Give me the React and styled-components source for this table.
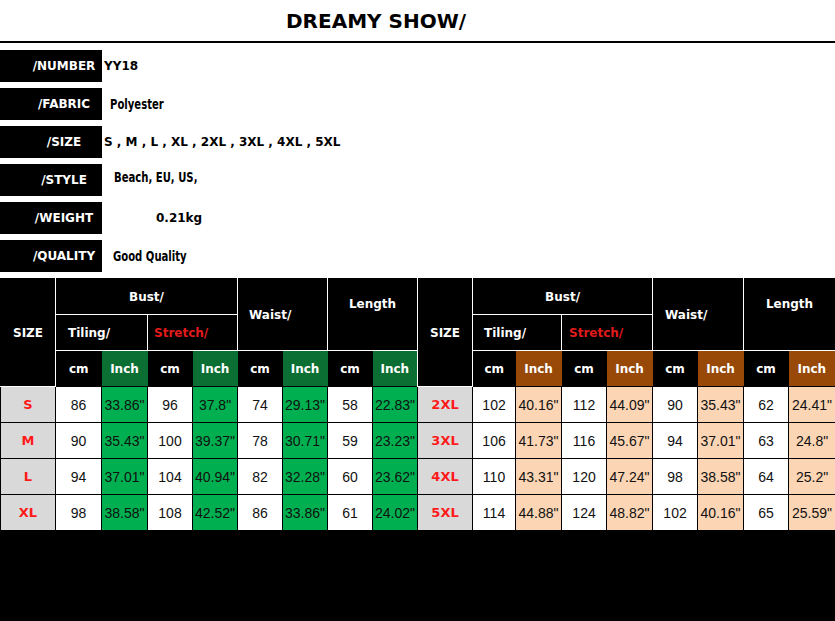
import React from 'react'
import styled, { createGlobalStyle } from 'styled-components'

const GlobalStyle = createGlobalStyle`
    html, body {
        margin: 0;
        padding: 0;
        background: #fff;
    }
    body {
        width: 835px;
        font-family: "DejaVu Sans", Verdana, sans-serif;
    }
`

const info = [
    { label: '/NUMBER', value: 'YY18', indent: 2 },
    { label: '/FABRIC', value: 'Polyester', indent: 8, narrow: true },
    { label: '/SIZE', value: 'S , M , L , XL , 2XL , 3XL , 4XL , 5XL', indent: 2 },
    { label: '/STYLE', value: 'Beach, EU, US,', indent: 12, narrow: true, lift: 3 },
    { label: '/WEIGHT', value: '0.21kg', indent: 54 },
    { label: '/QUALITY', value: 'Good Quality', indent: 11, narrow: true },
]

const leftRows = [
    ['S', '86', '33.86"', '96', '37.8"', '74', '29.13"', '58', '22.83"'],
    ['M', '90', '35.43"', '100', '39.37"', '78', '30.71"', '59', '23.23"'],
    ['L', '94', '37.01"', '104', '40.94"', '82', '32.28"', '60', '23.62"'],
    ['XL', '98', '38.58"', '108', '42.52"', '86', '33.86"', '61', '24.02"'],
]

const rightRows = [
    ['2XL', '102', '40.16"', '112', '44.09"', '90', '35.43"', '62', '24.41"'],
    ['3XL', '106', '41.73"', '116', '45.67"', '94', '37.01"', '63', '24.8"'],
    ['4XL', '110', '43.31"', '120', '47.24"', '98', '38.58"', '64', '25.2"'],
    ['5XL', '114', '44.88"', '124', '48.82"', '102', '40.16"', '65', '25.59"'],
]

const colWidths = [55, 46, 46, 45, 45, 45, 45, 45, 45, 55, 43, 46, 45, 46, 45, 46, 45, 47]

function HalfHeader({ first }) {
    return (
        <>
            <HeadCell rowSpan={3} $noTop $noLeft={first}>SIZE</HeadCell>
            <HeadCell colSpan={4} $noTop>Bust/</HeadCell>
            <HeadCell colSpan={2} rowSpan={2} $noTop $align="left" $pad={first ? 11 : 12}>Waist/</HeadCell>
            <HeadCell colSpan={2} rowSpan={2} $noTop $noRight={!first} $lift>Length</HeadCell>
        </>
    )
}

function App() {
    return (
        <Page>
            <GlobalStyle />
            <TitleBar>
                <Title>DREAMY SHOW/</Title>
            </TitleBar>

            <InfoList>
                {info.map((row) => (
                    <InfoRow key={row.label}>
                        <Label>{row.label}</Label>
                        <Value $indent={row.indent} $narrow={row.narrow} $lift={row.lift}>
                            {row.value}
                        </Value>
                    </InfoRow>
                ))}
            </InfoList>

            <SizeTable>
                <colgroup>
                    {colWidths.map((w, i) => <col key={i} style={{ width: w }} />)}
                </colgroup>
                <thead>
                    <tr>
                        <HalfHeader first />
                        <HalfHeader />
                    </tr>
                    <tr>
                        <HeadCell colSpan={2} $align="left" $pad={12}>Tiling/</HeadCell>
                        <HeadCell colSpan={2} $align="left" $pad={6} $red>Stretch/</HeadCell>
                        <HeadCell colSpan={2} $align="left" $pad={11}>Tiling/</HeadCell>
                        <HeadCell colSpan={2} $align="left" $pad={7} $red>Stretch/</HeadCell>
                    </tr>
                    <tr>
                        {['green', 'brown'].map((tone) =>
                            [0, 1, 2, 3].map((i) => (
                                <React.Fragment key={tone + i}>
                                    <UnitCell>cm</UnitCell>
                                    <UnitCell $tone={tone}>Inch</UnitCell>
                                </React.Fragment>
                            ))
                        )}
                    </tr>
                </thead>
                <tbody>
                    {leftRows.map((row, r) => (
                        <tr key={row[0]}>
                            {[row, rightRows[r]].map((half, h) =>
                                half.map((val, i) => {
                                    if (i === 0) return <SizeCell key={h + '-' + i}>{val}</SizeCell>
                                    const tone = i % 2 === 0 ? (h === 0 ? 'green' : 'peach') : 'white'
                                    return <DataCell key={h + '-' + i} $tone={tone}>{val}</DataCell>
                                })
                            )}
                        </tr>
                    ))}
                </tbody>
            </SizeTable>

            <Footer />
        </Page>
    )
}

export default App

const Page = styled.div`
    width: 835px;
    display: flex;
    flex-direction: column;
`

const TitleBar = styled.div`
    height: 41px;
    border-bottom: 2px solid #000;
    display: flex;
    align-items: center;
    padding-left: 286px;
    box-sizing: content-box;
`

const Title = styled.h1`
    margin: 0;
    font-family: "DejaVu Sans", Verdana, sans-serif;
    font-weight: bold;
    font-size: 20px;
    color: #000;
    letter-spacing: 0;
`

const InfoList = styled.div`
    display: flex;
    flex-direction: column;
    gap: 6px;
    margin-top: 7px;
`

const InfoRow = styled.div`
    display: flex;
    align-items: center;
    height: 32px;
`

const Label = styled.div`
    width: 102px;
    height: 32px;
    background: #000;
    color: #fff;
    box-sizing: border-box;
    padding-left: 26px;
    display: flex;
    align-items: center;
    justify-content: center;
    font-weight: bold;
    font-size: 12px;
    white-space: nowrap;
`

const Value = styled.span`
    display: inline-block;
    margin-left: ${(p) => p.$indent}px;
    font-weight: bold;
    color: #000;
    white-space: nowrap;
    font-family: ${(p) => (p.$narrow ? '"DejaVu Sans Condensed", "DejaVu Sans", sans-serif' : '"DejaVu Sans", Verdana, sans-serif')};
    font-size: ${(p) => (p.$narrow ? '14px' : '12px')};
    transform: ${(p) => (p.$narrow ? 'scaleX(0.8)' : 'none')};
    transform-origin: left center;
    position: relative;
    top: ${(p) => (p.$lift ? -p.$lift : 0)}px;
`

const SizeTable = styled.table`
    width: 835px;
    margin-top: 6px;
    border-collapse: collapse;
    table-layout: fixed;
    border: 1px solid #000;

    tr {
        height: 36px;
    }
`

const HeadCell = styled.th`
    background: #000;
    color: ${(p) => (p.$red ? '#e21b1b' : '#fff')};
    font-family: "DejaVu Sans", Verdana, sans-serif;
    font-weight: bold;
    font-size: 12px;
    padding: 0 0 ${(p) => (p.$lift ? 22 : 0)}px ${(p) => p.$pad || 0}px;
    text-align: ${(p) => p.$align || 'center'};
    vertical-align: middle;
    white-space: nowrap;
    border: 1px solid #fff;
    ${(p) => p.$noTop && 'border-top: none;'}
    ${(p) => p.$noLeft && 'border-left: none;'}
    ${(p) => p.$noRight && 'border-right: none;'}
`

const UnitCell = styled.th`
    background: ${(p) => (p.$tone === 'green' ? '#0b6f34' : p.$tone === 'brown' ? '#984807' : '#000')};
    color: #fff;
    font-family: "DejaVu Sans", Verdana, sans-serif;
    font-weight: bold;
    font-size: 12px;
    padding: 0;
    text-align: center;
    vertical-align: middle;
    border-top: 1px solid #fff;
    border-bottom: 1px solid #000;
    border-left: none;
    border-right: none;
`

const SizeCell = styled.td`
    background: #d9d9d9;
    color: #ff1a1a;
    font-family: "DejaVu Sans", Verdana, sans-serif;
    font-weight: bold;
    font-size: 13px;
    text-align: center;
    padding: 0;
    border: 1px solid #000;
`

const toneColors = {
    white: '#fff',
    green: '#00b050',
    peach: '#fcd5b4',
}

const DataCell = styled.td`
    background: ${(p) => toneColors[p.$tone]};
    color: #111;
    font-family: "Liberation Sans", Arial, sans-serif;
    font-size: 14px;
    text-align: center;
    padding: 0;
    white-space: nowrap;
    overflow: hidden;
    border: 1px solid #000;
`

const Footer = styled.div`
    height: 91px;
    background: #000;
`
